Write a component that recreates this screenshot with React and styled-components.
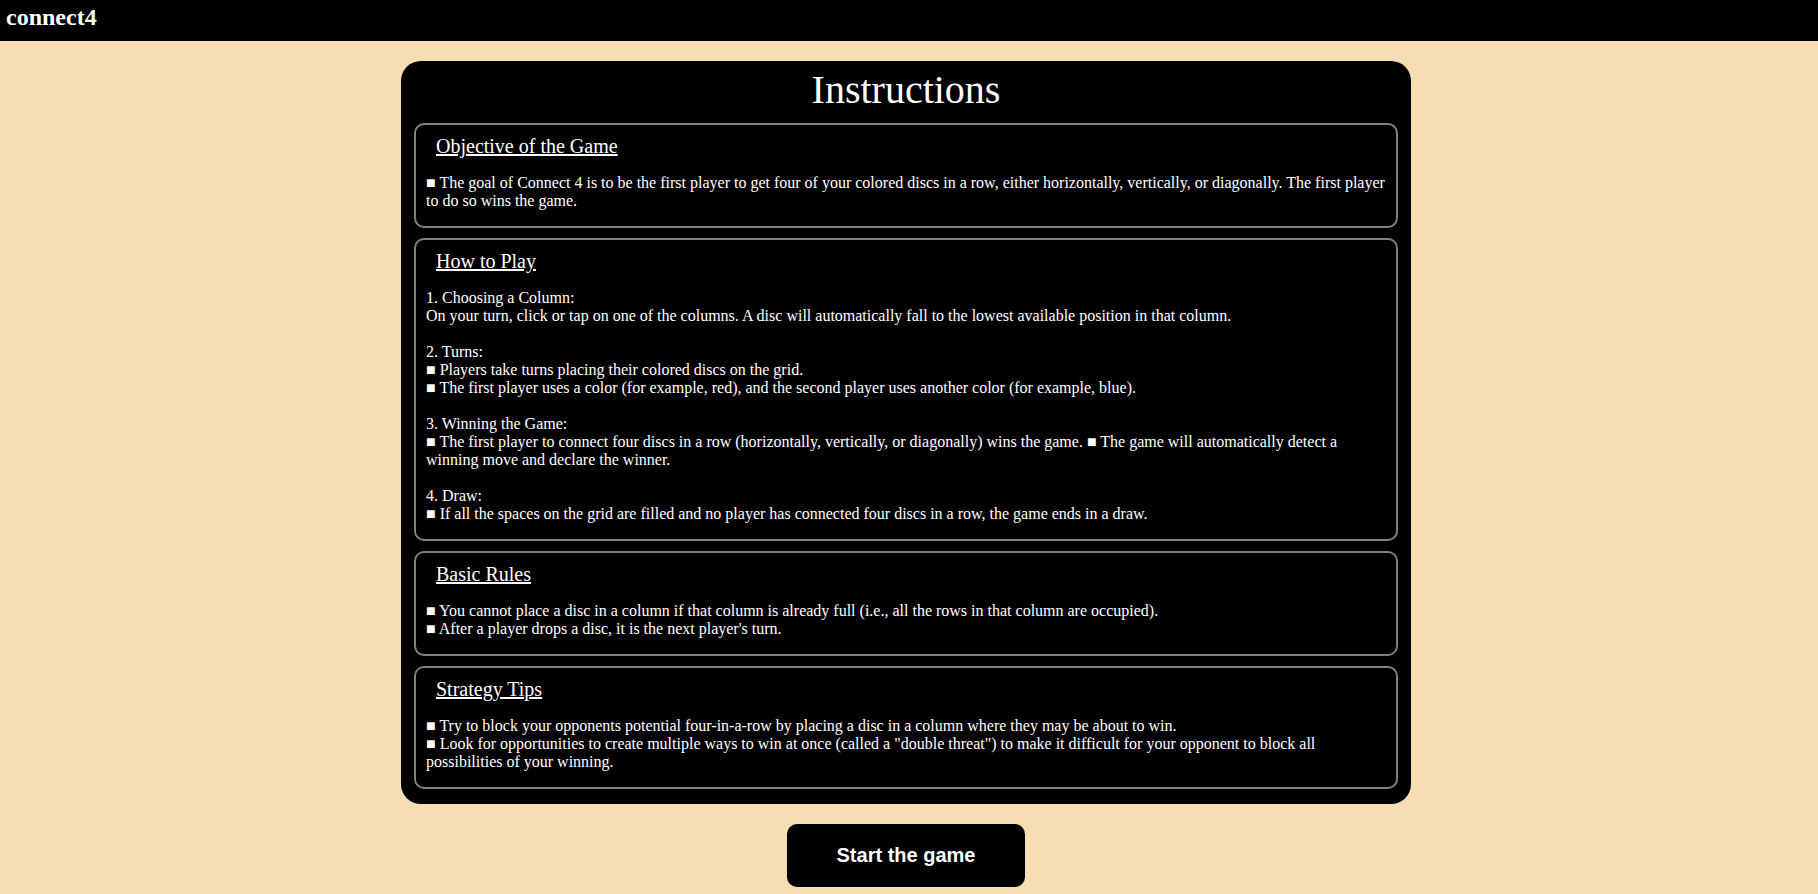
import React from "react";
import styled, { createGlobalStyle } from "styled-components";

const GlobalStyle = createGlobalStyle`
  * { box-sizing: border-box; }
  body {
    margin: 0;
    background: wheat;
    color: white;
    font-family: "Liberation Serif", "Times New Roman", serif;
    font-size: 16px;
    line-height: 18px;
  }
`;

const Header = styled.header`
  padding: 5px 6px 12px;
  background: black;
`;

const Brand = styled.h1`
  margin: 0;
  font-size: 24px;
  line-height: 24px;
  font-weight: bold;
`;

const Main = styled.main`
  display: flex;
  flex-direction: column;
  align-items: center;
  gap: 20px;
  padding: 20px 6px 6px 0;
`;

const Panel = styled.section`
  display: flex;
  flex-direction: column;
  gap: 10px;
  width: 100%;
  max-width: 1010px;
  padding: 6px 13px 15px;
  border-radius: 20px;
  background: black;
`;

const Title = styled.h2`
  margin: 0;
  font-size: 40px;
  line-height: 46px;
  font-weight: normal;
  text-align: center;
`;

const Card = styled.article`
  padding: 10px 10px 16px;
  border: 2px solid gray;
  border-radius: 10px;
`;

const CardTitle = styled.h3`
  margin: 0 0 16px;
  padding: 0 10px;
  font-size: 20px;
  line-height: 23px;
  font-weight: normal;
  text-decoration: underline;
`;

const CardText = styled.p`
  margin: 0;
  white-space: pre-line;
`;

const StartButton = styled.button`
  padding: 20px 50px;
  border: 0;
  border-radius: 10px;
  background: black;
  color: white;
  font-family: "Liberation Sans", Arial, sans-serif;
  font-size: 20px;
  line-height: 23px;
  font-weight: bold;
  cursor: pointer;
`;

const sections = [
  {
    title: "Objective of the Game",
    text: "■ The goal of Connect 4 is to be the first player to get four of your colored discs in a row, either horizontally, vertically, or diagonally. The first player to do so wins the game.",
  },
  {
    title: "How to Play",
    text: `1. Choosing a Column:
On your turn, click or tap on one of the columns. A disc will automatically fall to the lowest available position in that column.

2. Turns:
■ Players take turns placing their colored discs on the grid.
■ The first player uses a color (for example, red), and the second player uses another color (for example, blue).

3. Winning the Game:
■ The first player to connect four discs in a row (horizontally, vertically, or diagonally) wins the game. ■ The game will automatically detect a winning move and declare the winner.

4. Draw:
■ If all the spaces on the grid are filled and no player has connected four discs in a row, the game ends in a draw.`,
  },
  {
    title: "Basic Rules",
    text: `■ You cannot place a disc in a column if that column is already full (i.e., all the rows in that column are occupied).
■ After a player drops a disc, it is the next player's turn.`,
  },
  {
    title: "Strategy Tips",
    text: `■ Try to block your opponents potential four-in-a-row by placing a disc in a column where they may be about to win.
■ Look for opportunities to create multiple ways to win at once (called a "double threat") to make it difficult for your opponent to block all possibilities of your winning.`,
  },
];

export default function App() {
  return (
    <>
      <GlobalStyle />
      <Header>
        <Brand>connect4</Brand>
      </Header>
      <Main>
        <Panel>
          <Title>Instructions</Title>
          {sections.map(({ title, text }) => (
            <Card key={title}>
              <CardTitle>{title}</CardTitle>
              <CardText>{text}</CardText>
            </Card>
          ))}
        </Panel>
        <StartButton type="button">Start the game</StartButton>
      </Main>
    </>
  );
}
